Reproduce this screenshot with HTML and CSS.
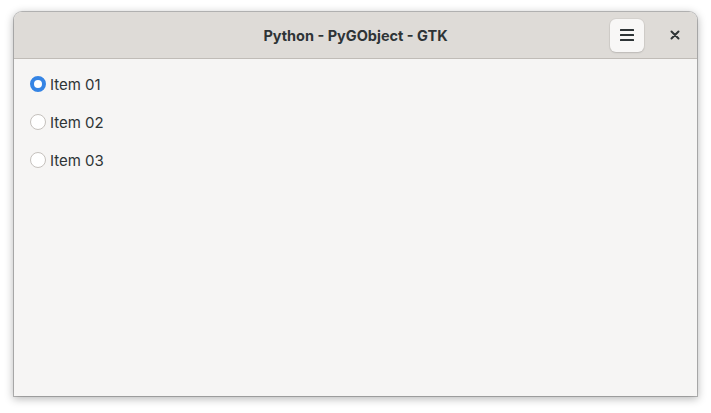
FILE: index.html
```html
<!DOCTYPE html>
<html>
<head>
<meta charset="utf-8">
<link rel="stylesheet" href="styles.css">
</head>
<body>
<div class="window">
  <header class="headerbar">
    <div class="title">Python - PyGObject - GTK</div>
    <div class="controls">
      <button class="menu-btn" aria-label="Menu">
        <svg width="16" height="16" viewBox="0 0 16 16"><rect x="1" y="2" width="14" height="2" rx="0.5" fill="#2e3436"/><rect x="1" y="7" width="14" height="2" rx="0.5" fill="#2e3436"/><rect x="1" y="12" width="14" height="2" rx="0.5" fill="#2e3436"/></svg>
      </button>
      <button class="close-btn" aria-label="Close">
        <svg width="10" height="10" viewBox="0 0 10 10"><path d="M1.5 1.5 L8.5 8.5 M8.5 1.5 L1.5 8.5" stroke="#2e3436" stroke-width="2" stroke-linecap="round"/></svg>
      </button>
    </div>
  </header>
  <main class="content">
    <label class="radio-row"><span class="radio checked"></span><span class="label">Item 01</span></label>
    <label class="radio-row"><span class="radio"></span><span class="label">Item 02</span></label>
    <label class="radio-row"><span class="radio"></span><span class="label">Item 03</span></label>
  </main>
</div>
</body>
</html>
```

FILE: styles.css
```css
html, body {
  margin: 0;
  padding: 0;
  background: #ffffff;
  width: 711px;
  height: 413px;
  overflow: hidden;
}
body {
  padding: 12px 0 0 14px;
  box-sizing: border-box;
  font-family: "Inter", "Noto Sans", sans-serif;
  color: #2e3436;
}
.window {
  width: 683px;
  height: 384px;
  border-radius: 8px 8px 0 0;
  background: #f6f5f4;
  box-shadow: 0 0 0 1px rgba(0,0,0,0.23), 0 2px 8px 1px rgba(0,0,0,0.28);
  display: flex;
  flex-direction: column;
  overflow: hidden;
}
.headerbar {
  position: relative;
  height: 47px;
  box-sizing: border-box;
  background: #dedbd7;
  border-bottom: 1px solid #c0bcb7;
  display: flex;
  align-items: center;
  justify-content: center;
}
.title {
  font-weight: 700;
  font-size: 14.5px;
  color: #2e3436;
  letter-spacing: 0;
}
.controls {
  position: absolute;
  right: 0;
  top: 0;
  height: 46px;
  display: flex;
  align-items: center;
  padding-right: 5px;
  gap: 14px;
}
.menu-btn {
  width: 34px;
  height: 33px;
  border: none;
  border-radius: 6px;
  background: #f8f7f6;
  box-shadow: 0 1px 2px rgba(0,0,0,0.12), 0 0 0 1px rgba(0,0,0,0.04);
  display: flex;
  align-items: center;
  justify-content: center;
  padding: 0;
}
.close-btn {
  width: 34px;
  height: 30px;
  border: none;
  background: transparent;
  display: flex;
  align-items: center;
  justify-content: center;
  padding: 0;
}
.content {
  flex: 1;
  padding: 6px 0 0 16px;
  display: flex;
  flex-direction: column;
}
.radio-row {
  height: 38px;
  display: flex;
  align-items: center;
  gap: 4px;
}
.radio {
  width: 16px;
  height: 16px;
  box-sizing: border-box;
  border-radius: 50%;
  border: 1px solid #c5c1bd;
  background: #ffffff;
}
.radio.checked {
  border: 4.5px solid #3584e4;
  background: #ffffff;
}
.label {
  font-size: 15px;
  color: #2e3436;
}
```
